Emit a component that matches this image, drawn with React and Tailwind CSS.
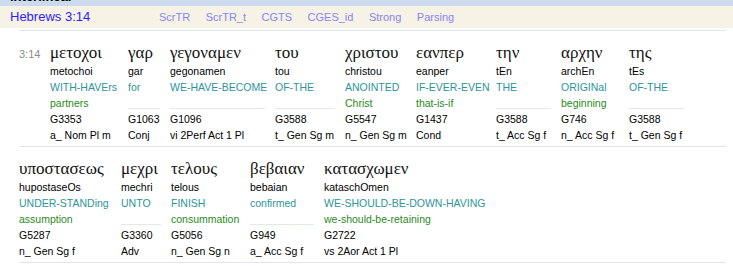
import React from "react";

const rows = [
  {
    verse: "3:14",
    words: [
      { gk: "μετοχοι", tr: "metochoi", en: "WITH-HAVErs", en2: "partners", sn: "G3353", ps: "a_ Nom Pl m", w: "w-[78px]" },
      { gk: "γαρ", tr: "gar", en: "for", en2: "", sn: "G1063", ps: "Conj", w: "w-[42px]" },
      { gk: "γεγοναμεν", tr: "gegonamen", en: "WE-HAVE-BECOME", en2: "", sn: "G1096", ps: "vi 2Perf Act 1 Pl", w: "w-[105px]" },
      { gk: "του", tr: "tou", en: "OF-THE", en2: "", sn: "G3588", ps: "t_ Gen Sg m", w: "w-[70px]" },
      { gk: "χριστου", tr: "christou", en: "ANOINTED", en2: "Christ", sn: "G5547", ps: "n_ Gen Sg m", w: "w-[71px]" },
      { gk: "εανπερ", tr: "eanper", en: "IF-EVER-EVEN", en2: "that-is-if", sn: "G1437", ps: "Cond", w: "w-[80px]" },
      { gk: "την", tr: "tEn", en: "THE", en2: "", sn: "G3588", ps: "t_ Acc Sg f", w: "w-[65px]" },
      { gk: "αρχην", tr: "archEn", en: "ORIGINal", en2: "beginning", sn: "G746", ps: "n_ Acc Sg f", w: "w-[68px]" },
      { gk: "της", tr: "tEs", en: "OF-THE", en2: "", sn: "G3588", ps: "t_ Gen Sg f", w: "w-[65px]" },
    ],
  },
  {
    verse: null,
    words: [
      { gk: "υποστασεως", tr: "hupostaseOs", en: "UNDER-STANDing", en2: "assumption", sn: "G5287", ps: "n_ Gen Sg f", w: "w-[102px]" },
      { gk: "μεχρι", tr: "mechri", en: "UNTO", en2: "", sn: "G3360", ps: "Adv", w: "w-[50px]" },
      { gk: "τελους", tr: "telous", en: "FINISH", en2: "consummation", sn: "G5056", ps: "n_ Gen Sg n", w: "w-[79px]" },
      { gk: "βεβαιαν", tr: "bebaian", en: "confirmed", en2: "", sn: "G949", ps: "a_ Acc Sg f", w: "w-[74px]" },
      { gk: "κατασχωμεν", tr: "kataschOmen", en: "WE-SHOULD-BE-DOWN-HAVING", en2: "we-should-be-retaining", sn: "G2722", ps: "vs 2Aor Act 1 Pl", w: "w-[180px]" },
    ],
  },
];

const links = ["ScrTR", "ScrTR_t", "CGTS", "CGES_id", "Strong", "Parsing"];

function Word({ word }) {
  return (
    <div className={`${word.w} shrink-0 pr-[10px] whitespace-nowrap`}>
      <div className="h-[20px] leading-[20px] text-[17px] font-['Liberation_Serif',serif] text-[#111]">
        {word.gk}
      </div>
      <div className="h-[16px] leading-[16px]">{word.tr}</div>
      <div className="h-[16px] leading-[16px] text-[#2b9598]">{word.en}</div>
      {word.en2 ? (
        <div className="h-[16px] leading-[16px] text-[#2a8a22]">{word.en2}</div>
      ) : (
        <div className="h-[16px] pb-[2px] flex items-end">
          <div className="w-full border-b border-[#e3ece3]" />
        </div>
      )}
      <div className="h-[16px] leading-[16px]">{word.sn}</div>
      <div className="h-[16px] leading-[16px]">{word.ps}</div>
    </div>
  );
}

export default function App() {
  return (
    <div className="w-[733px] h-[268px] bg-white overflow-hidden font-['Liberation_Sans',Arial,sans-serif] text-[10.5px] text-black">
      <div className="h-[6px] bg-[#cbdaed] overflow-hidden pl-[10px]">
        <div className="-mt-[10px] text-[13px] font-bold leading-[14px]">Interlinear</div>
      </div>
      <div className="h-[22px] bg-[#f6f2e6] flex items-center pl-[10px]">
        <div className="w-[149px] text-[13px] text-[#2f1cff]">Hebrews 3:14</div>
        <div className="flex gap-[15.5px] text-[11px] text-[#8a84f6]">
          {links.map((l) => (
            <span key={l}>{l}</span>
          ))}
        </div>
      </div>
      <div className="mt-[2px] ml-[19px] mr-[7px] border-t border-[#dfe5f4]">
        {rows.map((row, i) => (
          <div key={i} className="flex border-b border-[#dfe5f4] pt-[12px] pb-[3px]">
            {row.verse && (
              <div className="w-[31px] shrink-0 pt-[3px] text-[11px] leading-[16px] text-[#8a8a8a]">
                {row.verse}
              </div>
            )}
            {row.words.map((w) => (
              <Word key={w.tr} word={w} />
            ))}
          </div>
        ))}
      </div>
    </div>
  );
}
